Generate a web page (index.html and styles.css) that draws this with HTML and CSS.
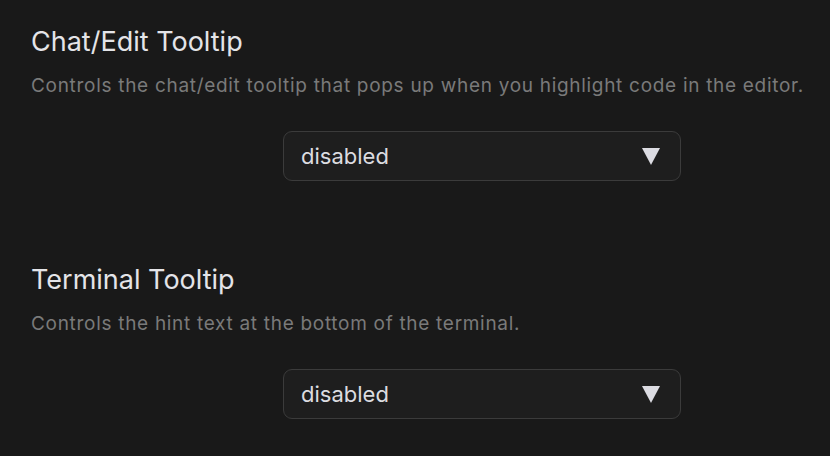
FILE: index.html
```html
<!DOCTYPE html>
<html lang="en">
<head>
    <meta charset="UTF-8">
    <meta name="viewport" content="width=device-width, initial-scale=1.0">
    <title>Tooltip Settings</title>
    <link rel="stylesheet" href="styles.css">
</head>
<body>
    <div class="settings">
        <div class="setting">
            <h2 class="setting-title">Chat/Edit Tooltip</h2>
            <p class="setting-desc">Controls the chat/edit tooltip that pops up when you highlight code in the editor.</p>
            <div class="select">
                <span class="select-value">disabled</span>
                <svg class="select-arrow" width="18" height="17" viewBox="0 0 18 17"><polygon points="0,0 18,0 9,17" fill="#dcdce2"/></svg>
            </div>
        </div>
        <div class="setting">
            <h2 class="setting-title">Terminal Tooltip</h2>
            <p class="setting-desc">Controls the hint text at the bottom of the terminal.</p>
            <div class="select">
                <span class="select-value">disabled</span>
                <svg class="select-arrow" width="18" height="17" viewBox="0 0 18 17"><polygon points="0,0 18,0 9,17" fill="#dcdce2"/></svg>
            </div>
        </div>
    </div>
</body>
</html>
```

FILE: styles.css
```css
body {
    margin: 0;
    padding: 0;
    background-color: #191919;
    font-family: Inter, "Noto Sans", sans-serif;
    height: 456px;
    overflow: hidden;
}
.settings {
    padding: 27px 0 0 31px;
    display: flex;
    flex-direction: column;
    gap: 84px;
}
.setting-title {
    margin: 0;
    font-size: 27px;
    line-height: 30px;
    font-weight: 400;
    color: #e4e4e8;
}
.setting-desc {
    margin: 17px 0 0 0;
    font-size: 19px;
    line-height: 24px;
    color: #7a7a7a;
    letter-spacing: 0.7px;
    white-space: nowrap;
}
.select {
    margin: 33px 0 0 252px;
    width: 398px;
    height: 50px;
    box-sizing: border-box;
    border: 1.5px solid #3b3b3b;
    border-radius: 9px;
    background-color: #1e1e1e;
    display: flex;
    align-items: center;
    justify-content: space-between;
    padding: 0 20px 0 17px;
}
.select-value {
    font-size: 22px;
    color: #dcdce0;
}
.select-arrow {
    display: block;
}
```
